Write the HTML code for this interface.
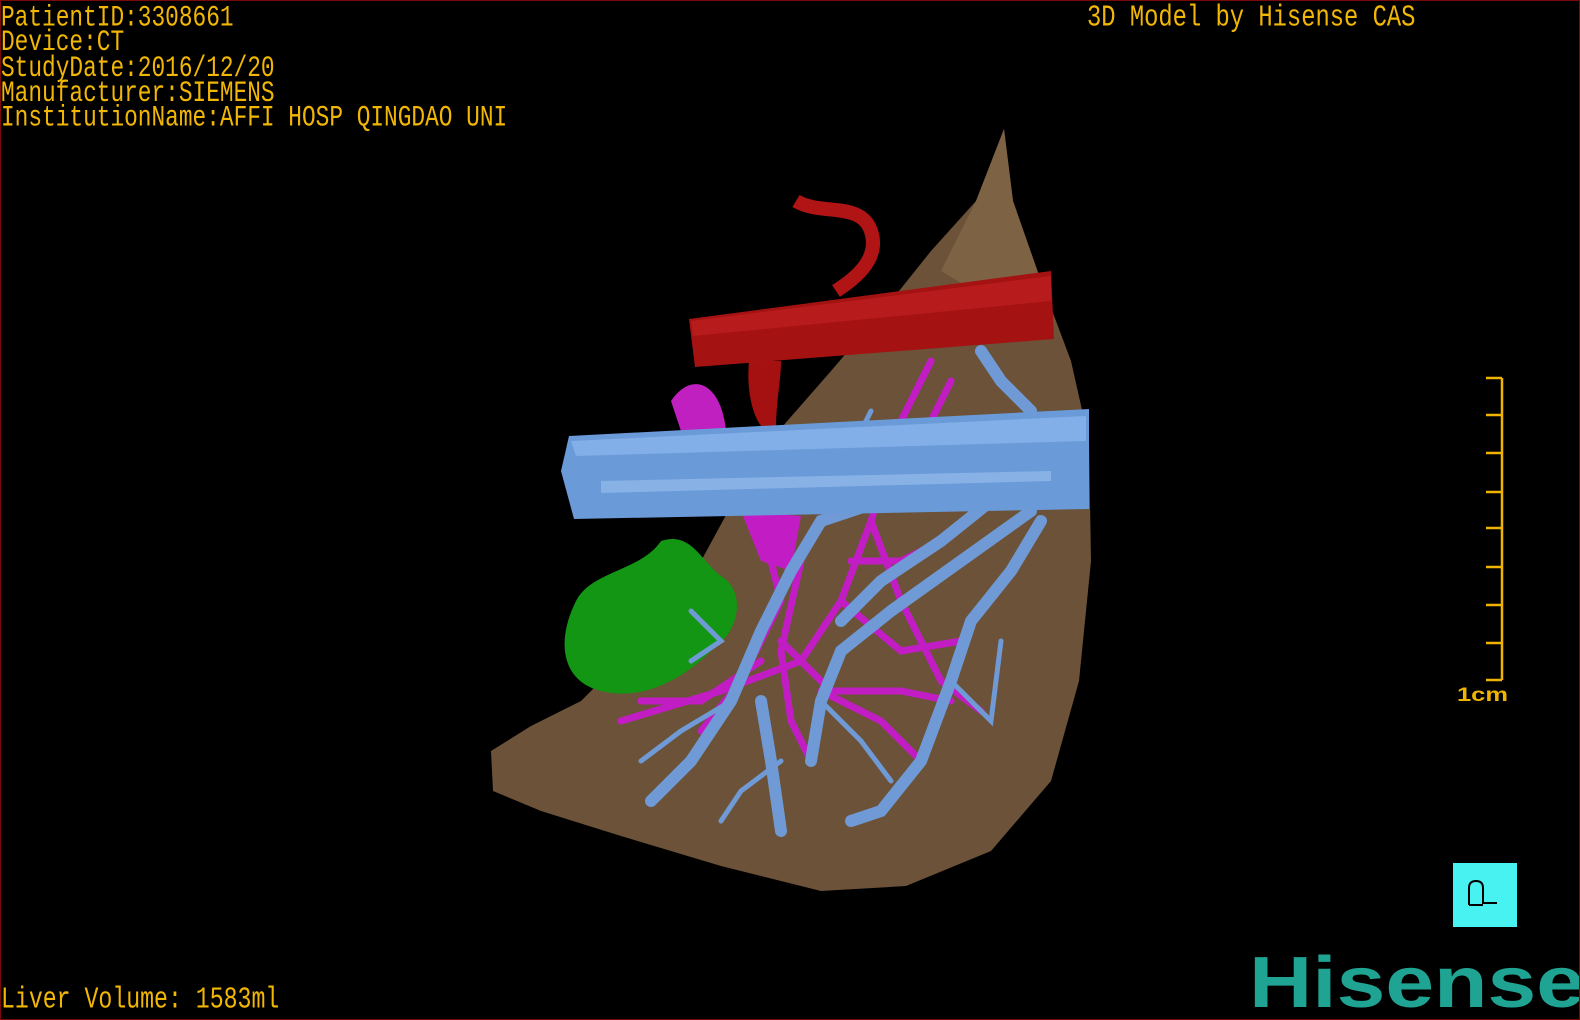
<!DOCTYPE html>
<html><head><meta charset="utf-8"><style>
html,body{margin:0;padding:0;background:#000;}
#c{position:relative;width:1578px;height:1018px;border:1px solid #7a0a0a;overflow:hidden;background:#000;}
.t{position:absolute;font-family:"Liberation Mono",monospace;font-size:22.8px;color:#f2b705;white-space:pre;transform:scaleY(1.3);transform-origin:0 0;line-height:19.3px;letter-spacing:0;}
</style></head><body><div id="c">
<div class="t" style="left:0;top:5px">PatientID:3308661
Device:CT
StudyDate:2016/12/20
Manufacturer:SIEMENS
InstitutionName:AFFI HOSP QINGDAO UNI</div>
<div class="t" style="left:1086px;top:5px;font-size:23.8px">3D Model by Hisense CAS</div>
<div class="t" style="left:0;top:987px;font-size:23.2px">Liver Volume: 1583ml</div>
<svg width="1578" height="1018" style="position:absolute;left:0;top:0">
<!-- liver -->
<path d="M1003,128 L1012,200 L1040,280 L1070,360 L1088,440 L1090,560 L1078,680 L1050,780 L990,850 L905,885 L820,890 L720,865 L620,835 L540,810 L492,790 L490,750 L530,725 L580,700 L630,650 L700,560 L760,450 L830,370 L890,300 L930,250 L975,200 Z" fill="#6b5238"/>
<path d="M1003,128 L1012,200 L1040,280 L990,300 L940,270 L975,200 Z" fill="#7d6244"/>
<!-- red -->
<path d="M795,200 C820,215 860,200 870,230 C880,260 850,280 835,290" stroke="#b01414" stroke-width="14" fill="none"/>
<path d="M748,360 C745,390 752,420 765,430 L775,428 C775,400 780,380 780,360Z" fill="#a51010"/>
<path d="M688,318 L1050,270 L1053,338 L694,366 Z" fill="#a51212"/>
<path d="M690,320 L1050,275 L1050,300 L692,335Z" fill="#c02020" opacity="0.7"/>
<!-- magenta -->
<path d="M670,400 C690,370 720,380 725,430 L680,430 Z" fill="#c020c0"/>
<path d="M740,510 L800,515 L790,570 L760,560Z" fill="#c21dc5"/>
<g stroke="#c21dc5" stroke-width="7" fill="none" stroke-linecap="round">
<path d="M930,360 L900,420 L870,520 L840,600 L800,660 L720,690 L620,720"/>
<path d="M870,520 L900,600 L940,680 L980,710"/>
<path d="M800,560 L780,650 L790,720 L810,760"/>
<path d="M840,600 L900,650 L960,640"/>
<path d="M760,520 L780,600 L740,680 L700,730"/>
<path d="M820,690 L880,720 L920,760"/>
<path d="M950,380 L930,420"/>
<path d="M780,640 L830,690 L900,690 L950,700"/>
<path d="M760,660 L700,700 L640,700"/>
<path d="M850,560 L900,560 L940,540"/>
</g>
<!-- green -->
<path d="M575,600 C590,570 640,570 660,540 C690,530 700,560 720,575 C745,590 740,630 710,650 C680,680 640,700 600,690 C560,680 555,640 575,600Z" fill="#139613"/>
<!-- blue branches -->
<g stroke="#6f9ad6" stroke-width="12" fill="none" stroke-linecap="round">
<path d="M910,490 L820,520 L790,570 L760,630 L730,700 L690,760 L650,800"/>
<path d="M1030,510 L960,560 L890,610 L840,650 L820,700 L810,760"/>
<path d="M990,500 L940,540 L880,580 L840,620"/>
<path d="M1040,520 L1010,570 L970,620 L950,680 L920,760 L880,810 L850,820"/>
<path d="M760,700 L770,760 L780,830"/>
<path d="M980,350 L1000,380 L1030,410"/>
</g>
<g stroke="#6f9ad6" stroke-width="5" fill="none" stroke-linecap="round">
<path d="M730,700 L680,730 L640,760"/>
<path d="M690,660 L720,640 L690,610"/>
<path d="M950,680 L990,720 L1000,640"/>
<path d="M820,700 L860,740 L890,780"/>
<path d="M780,760 L740,790 L720,820"/>
<path d="M870,410 L860,430"/>
</g>
<!-- blue tube -->
<path d="M568,435 L1088,408 L1088,508 L573,518 L560,470 Z" fill="#6a9ad8"/>
<path d="M570,440 L1085,415 L1085,440 L575,455 Z" fill="#8ab4ec" opacity="0.8"/>
<path d="M600,480 L1050,470 L1050,480 L600,492Z" fill="#9cc2f0" opacity="0.6"/>
<!-- scale -->
<g stroke="#f0b400" stroke-width="2.5">
<line x1="1501" y1="377" x2="1501" y2="679"/>
<line x1="1485" y1="377" x2="1501" y2="377"/><line x1="1485" y1="414" x2="1501" y2="414"/>
<line x1="1485" y1="452" x2="1501" y2="452"/><line x1="1485" y1="491" x2="1501" y2="491"/>
<line x1="1485" y1="527" x2="1501" y2="527"/><line x1="1485" y1="566" x2="1501" y2="566"/>
<line x1="1485" y1="604" x2="1501" y2="604"/><line x1="1485" y1="642" x2="1501" y2="642"/>
<line x1="1485" y1="679" x2="1501" y2="679"/>
</g>
<text x="1456" y="700" font-family="Liberation Sans,sans-serif" font-weight="bold" font-size="19" fill="#f0b400" textLength="51" lengthAdjust="spacingAndGlyphs">1cm</text>
<!-- icon -->
<rect x="1452" y="862" width="64" height="64" fill="#48f2f0"/>
<path d="M1468,904 L1468,887 Q1468,880 1475,880 Q1482,880 1482,887 L1482,902 L1496,902 M1468,904 L1482,904" stroke="#000" stroke-width="2" fill="none"/>
<text x="1248" y="1006" font-family="Liberation Sans,sans-serif" font-weight="bold" font-size="72" fill="#1fa393" textLength="336" lengthAdjust="spacingAndGlyphs">Hisense</text>
</svg>
</div></body></html>
